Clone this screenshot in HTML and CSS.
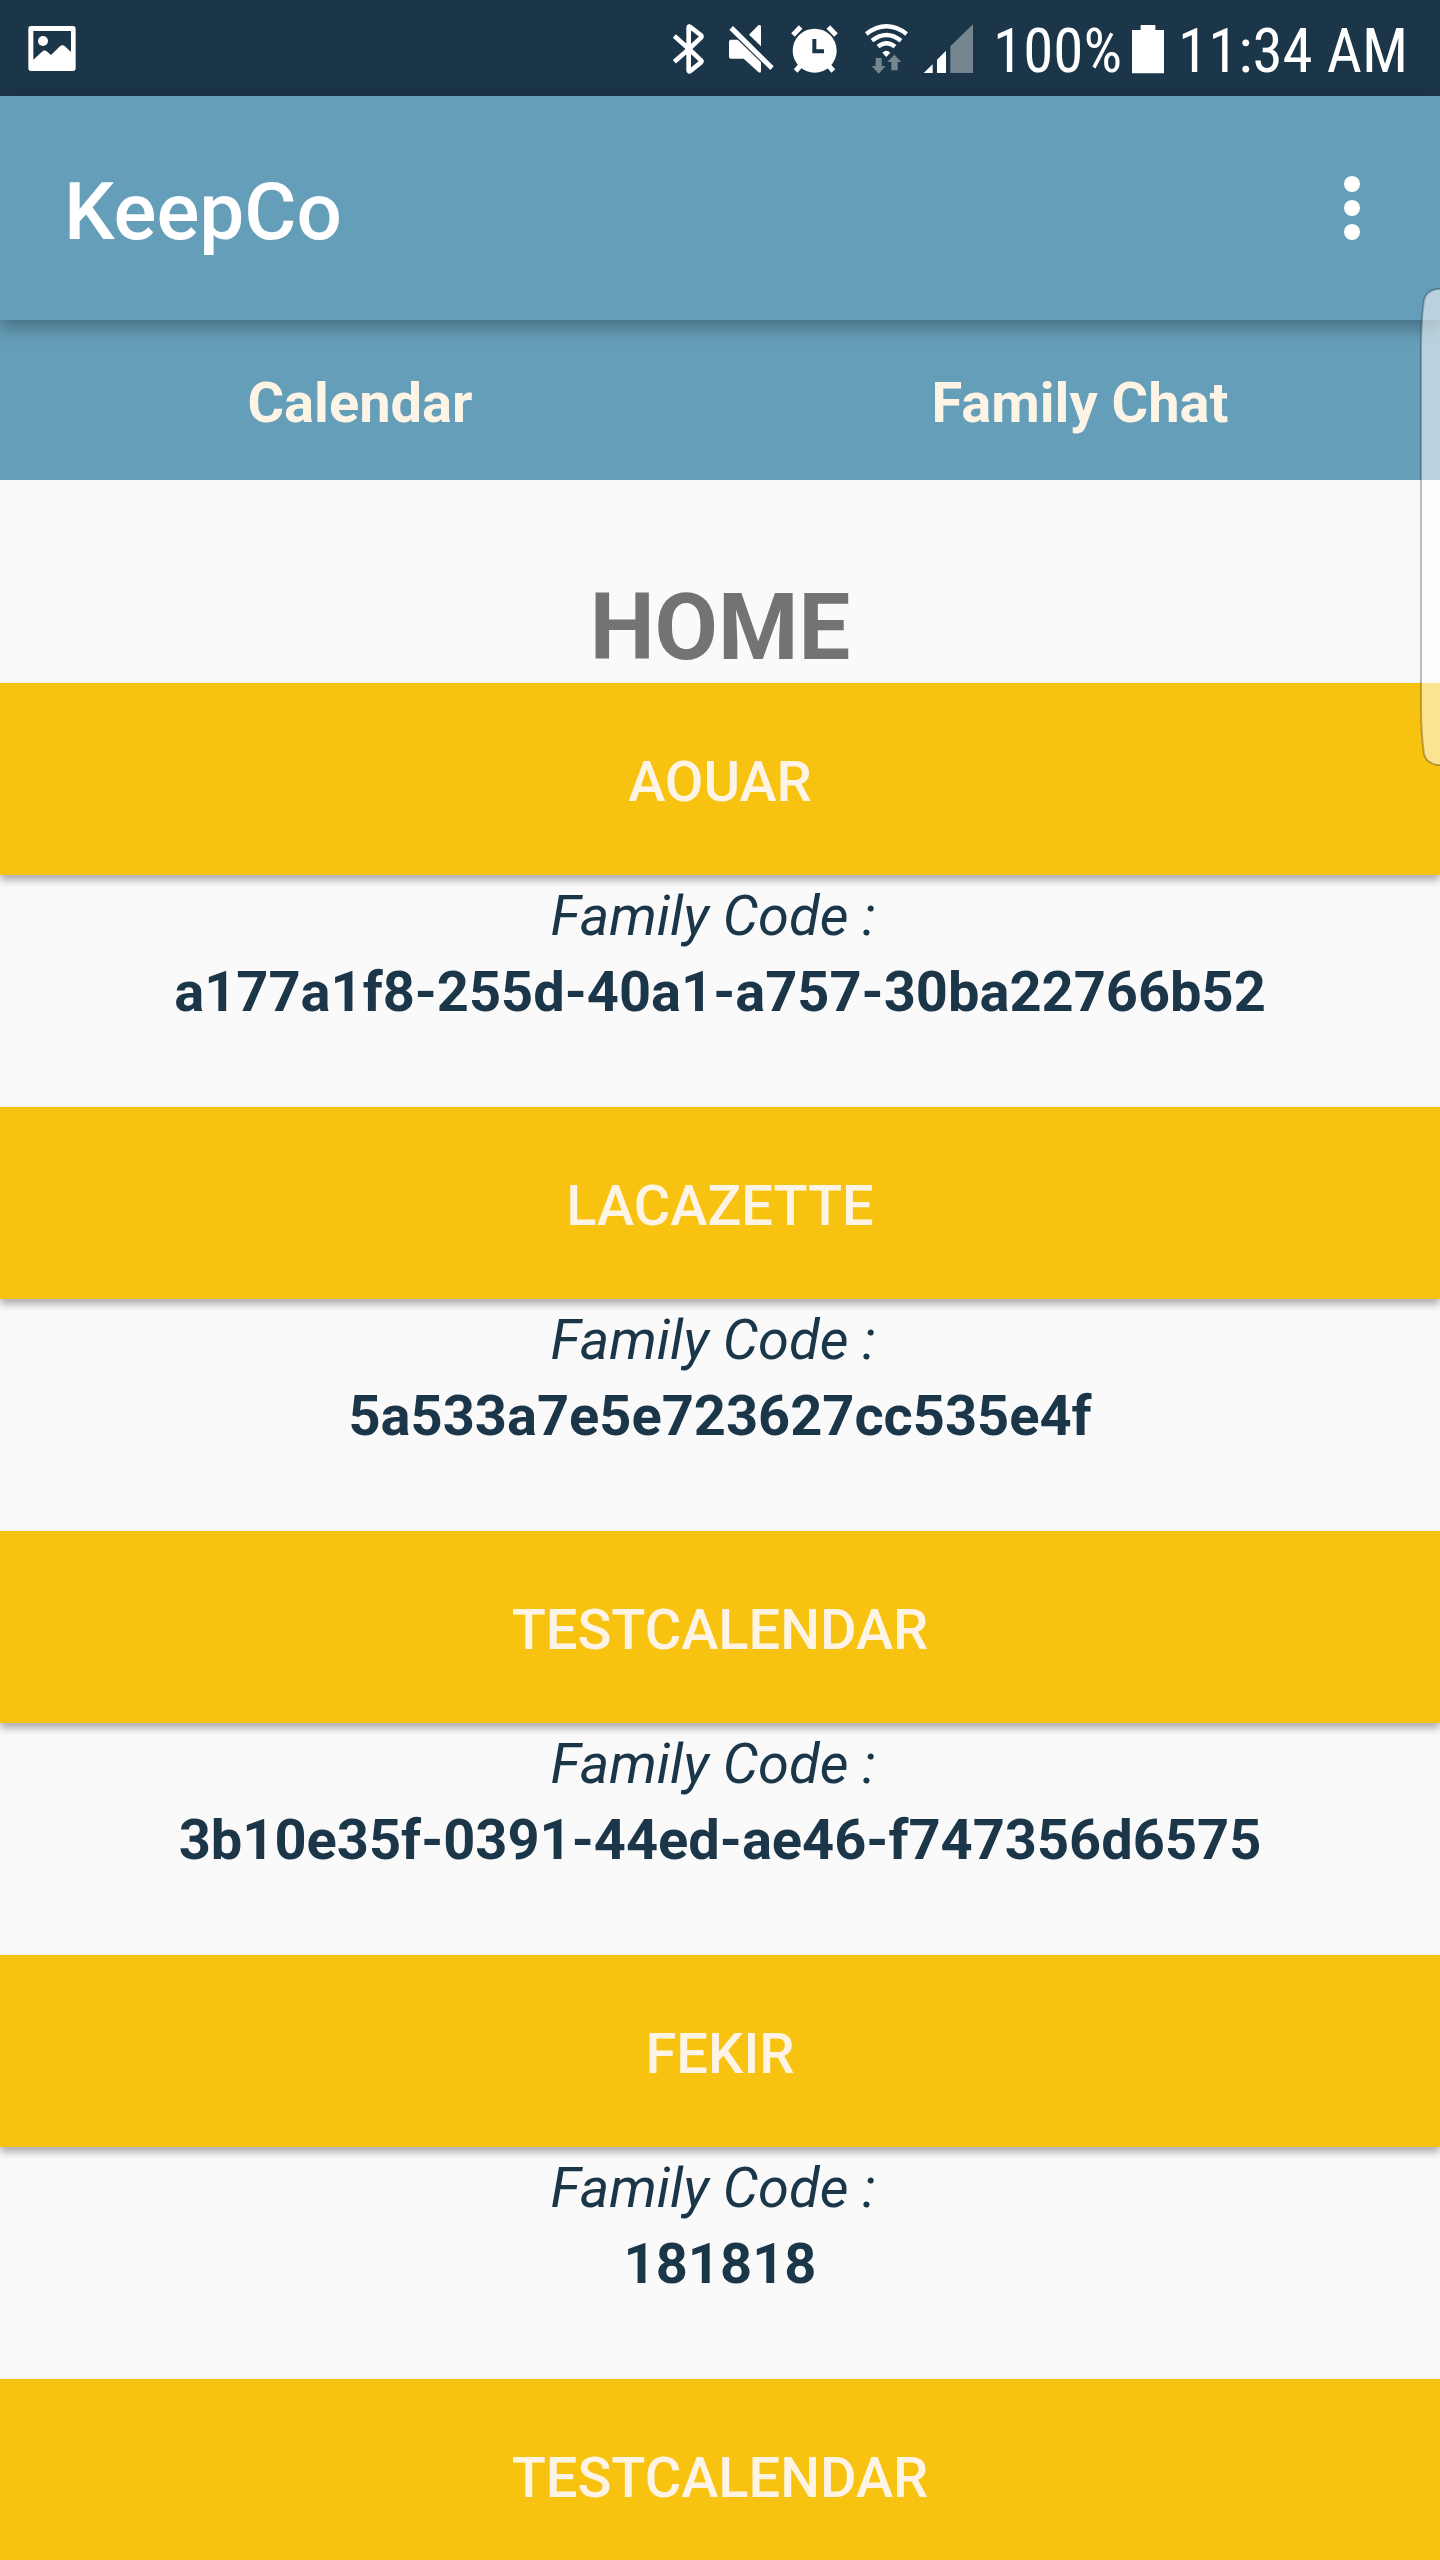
FILE: index.html
```html
<!DOCTYPE html>
<html lang="en">
<head>
<meta charset="utf-8">
<meta name="viewport" content="width=device-width, initial-scale=1">
<title>KeepCo</title>
<link rel="stylesheet" href="styles.css">
</head>
<body>
<div class="app">
  <div class="status-bar">
    <svg class="icon" viewBox="78 66 156 156" aria-hidden="true">
      <path fill="#fff" fill-rule="evenodd" d="M93 78H219Q227 78 227 86V205Q227 213 219 213H93Q85 213 85 205V86Q85 78 93 78ZM100 93V179L126 155Q134 148 142 155L153 165L180 139Q187 133 194 138L213 156V93Z"/>
      <circle cx="129" cy="123" r="15" fill="#fff"/>
    </svg>
    <div class="indicators">
      <svg class="icon" viewBox="36 66 156 156" aria-hidden="true">
        <path fill="none" stroke="#fff" stroke-width="14" stroke-linejoin="round" d="M70 108L114 147L150 181Q153 184 149 188L118 213Q113 217 113 211V83Q113 77 118 81L149 105Q153 109 150 113L114 147L70 185"/>
      </svg>
      <svg class="icon" viewBox="222 66 156 156" aria-hidden="true">
        <path fill="#fff" d="M294 104L322 76Q330 72 330 80V139ZM240 119H260L330 187V212Q330 222 322 216L278 176H240Q234 176 234 170V126Q234 119 240 119ZM246 78L368 199L358 210L235 89Z"/>
      </svg>
      <svg class="icon" viewBox="408 66 156 156" aria-hidden="true">
        <circle cx="491" cy="152" r="66" fill="#fff"/>
        <path fill="none" stroke="#fff" stroke-width="15" d="M426 105L449 81M555 105L532 81M434 213L449 196M547 213L532 196"/>
        <path fill="none" stroke="#1b3549" stroke-width="12" d="M490 117V154H519"/>
      </svg>
      <svg class="icon icon-wide" viewBox="594 66 186 156" aria-hidden="true">
        <path fill="none" stroke="#fff" stroke-width="13" d="M646 102Q706 56 767 102M663 122Q706 88 750 122M681 140Q706 119 732 140"/>
        <path fill="#fff" d="M694 158Q706 146 718 158L706 171Z"/>
        <path fill="#76868f" d="M674 174H692V198H704L683 221L662 198H674ZM721 211H740V186H751L730 164L709 186H721Z"/>
      </svg>
      <svg class="icon" viewBox="810 66 156 156" aria-hidden="true">
        <path fill="#fff" d="M818 219L845 193V219ZM858 219V179L885 152V219Z"/>
        <path fill="#76868f" d="M898 219V139L966 73V219Z"/>
      </svg>
      <span class="battery-level">100%</span>
      <svg class="icon icon-battery" viewBox="276 66 96 156" aria-hidden="true">
        <path fill="#fff" d="M302 75H346V90H372V220H276V90H302Z"/>
      </svg>
      <span class="clock">11:34 AM</span>
    </div>
  </div>

  <header class="toolbar">
    <div class="brand">KeepCo</div>
    <button class="menu-button" type="button" aria-label="More options">
      <svg class="menu-dots" viewBox="0 0 16 64" aria-hidden="true">
        <circle cx="8" cy="8" r="8" fill="#fff"/>
        <circle cx="8" cy="32" r="8" fill="#fff"/>
        <circle cx="8" cy="56" r="8" fill="#fff"/>
      </svg>
    </button>
  </header>

  <nav class="tabs">
    <a class="tab" href="#calendar">Calendar</a>
    <a class="tab" href="#chat">Family Chat</a>
  </nav>

  <main class="content">
    <h1 class="title">HOME</h1>
    <section class="family">
      <button class="family-button" type="button">AOUAR</button>
      <p class="code-label">Family Code : </p>
      <p class="code">a177a1f8-255d-40a1-a757-30ba22766b52</p>
    </section>
    <section class="family">
      <button class="family-button" type="button">LACAZETTE</button>
      <p class="code-label">Family Code : </p>
      <p class="code">5a533a7e5e723627cc535e4f</p>
    </section>
    <section class="family">
      <button class="family-button" type="button">TESTCALENDAR</button>
      <p class="code-label">Family Code : </p>
      <p class="code">3b10e35f-0391-44ed-ae46-f747356d6575</p>
    </section>
    <section class="family">
      <button class="family-button" type="button">FEKIR</button>
      <p class="code-label">Family Code : </p>
      <p class="code">181818</p>
    </section>
    <section class="family">
      <button class="family-button" type="button">TESTCALENDAR</button>
    </section>
  </main>

  <svg class="edge-handle" viewBox="0 0 20 478" aria-hidden="true">
    <path fill="#fff" fill-opacity=".54" stroke="#000" stroke-opacity=".26" stroke-width="2" d="M22 1H17Q6 3 4 12Q1 32 1 60V418Q1 446 4 466Q6 475 17 477H22"/>
  </svg>
</div>
</body>
</html>
```
FILE: styles.css
```css
:root {
  --navy: #1b3549;
  --blue: #659eb9;
  --yellow: #f8c210;
  --cream: #fdf4e6;
  --paper: #fafafa;
}

* {
  box-sizing: border-box;
}

body {
  margin: 0;
  font-family: Roboto, "Liberation Sans", sans-serif;
  font-size: 56px;
  color: var(--navy);
  background: var(--paper);
}

button {
  border: 0;
  font: inherit;
  cursor: pointer;
}

.app {
  position: relative;
  display: flex;
  flex-direction: column;
  height: 100vh;
  overflow: hidden;
}

.status-bar {
  flex: none;
  display: flex;
  align-items: center;
  justify-content: space-between;
  height: 96px;
  padding: 0 32px 0 26px;
  background: var(--navy);
  color: #fff;
}

.indicators {
  display: flex;
  align-items: center;
  gap: 10px;
  font-family: "Roboto Condensed", Roboto, sans-serif;
  font-size: 61px;
  line-height: 72px;
  white-space: nowrap;
}

.icon {
  flex: none;
  width: 52px;
  height: 52px;
}

.icon-wide {
  width: 62px;
}

.icon-battery {
  width: 32px;
}

.battery-level,
.clock {
  padding-top: 6px;
}

.battery-level {
  padding-left: 10px;
}

.clock {
  padding-left: 4px;
}

.toolbar {
  position: relative;
  z-index: 1;
  flex: none;
  display: flex;
  align-items: center;
  justify-content: space-between;
  height: 224px;
  padding: 0 64px;
  background: var(--blue);
  color: #fff;
  box-shadow: 0 8px 16px rgba(0, 0, 0, .3);
}

.brand {
  padding-top: 8px;
  font-size: 80px;
  font-weight: 500;
  line-height: 96px;
}

.menu-button {
  display: flex;
  align-items: center;
  justify-content: center;
  width: 48px;
  height: 96px;
  padding: 0;
  background: none;
}

.menu-dots {
  width: 16px;
  height: 64px;
}

.tabs {
  flex: none;
  display: grid;
  grid-template-columns: 1fr 1fr;
  height: 160px;
  background: var(--blue);
}

.tab {
  display: flex;
  align-items: center;
  justify-content: center;
  padding-top: 6px;
  color: var(--cream);
  font-weight: 700;
  text-decoration: none;
}

.content {
  flex: 1;
  min-height: 0;
  overflow-y: auto;
  scrollbar-width: none;
  text-align: center;
}

.title {
  margin: 0;
  padding: 94px 0 1px;
  color: #737373;
  font-size: 92px;
  font-weight: 700;
  line-height: 108px;
}

.family {
  min-height: 424px;
}

.family-button {
  display: block;
  width: 100%;
  height: 192px;
  margin-bottom: 3px;
  padding: 6px 0 0;
  background: var(--yellow);
  color: var(--cream);
  font-weight: 500;
  box-shadow: 0 5px 8px rgba(0, 0, 0, .32);
}

.code-label,
.code {
  margin: 0;
  line-height: 76px;
}

.code-label {
  font-style: italic;
  white-space: pre;
}

.code {
  font-weight: 700;
}

.edge-handle {
  position: absolute;
  z-index: 2;
  top: 288px;
  right: 0;
  width: 20px;
  height: 478px;
}
```
